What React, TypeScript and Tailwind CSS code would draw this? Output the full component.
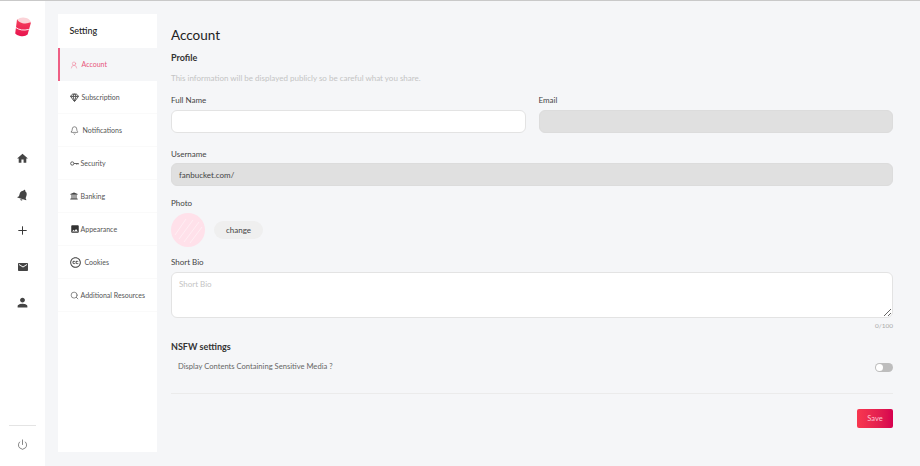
import { Bell, Gem, Plus, Power, Search, UserRound } from 'lucide-react';
import { FaCreativeCommons, FaUniversity } from 'react-icons/fa';
import { IoMdPerson } from 'react-icons/io';
import { MdHome, MdImage, MdMail, MdNotifications } from 'react-icons/md';

function KeyIcon() {
  return (
    <svg width="9" height="9" viewBox="0 0 12 12" fill="none" stroke="#555" strokeWidth="1.2" className="w-[9px] h-[9px]">
      <circle cx="3" cy="6" r="2.2" />
      <path d="M5.2 6H11.5M9 6v1.6M11 6v1.2" />
    </svg>
  );
}

function Logo() {
  return (
    <svg width="18" height="20" viewBox="0 0 18 20">
      <defs>
        <linearGradient id="bucket" x1="0" y1="0" x2="0" y2="1">
          <stop offset="0" stopColor="#f5405c" />
          <stop offset="1" stopColor="#e8144f" />
        </linearGradient>
      </defs>
      <path d="M3 2.5 L17 5.5 L13.6 17.5 Q11 20 6 19 Q2.5 18.4 1.2 16.5 Z" fill="url(#bucket)" />
      <path d="M3.4 2.6 Q6 0 11 0.7 Q15.8 1.6 16.8 5.1 Q13 7.2 8.5 6.2 Q4.4 5.2 3.4 2.6 Z" fill="#fbd3d8" />
      <path d="M1.8 10.5 Q7 14.4 14.8 12.4" fill="none" stroke="#fff" strokeWidth="0.9" />
    </svg>
  );
}

const menu = [
  { label: 'Subscription', icon: <Gem size={9} strokeWidth={2.4} color="#444" />, gap: 'gap-[3px]' },
  { label: 'Notifications', icon: <Bell size={9} strokeWidth={1.6} color="#444" />, gap: 'gap-[4px]' },
  { label: 'Security', icon: <KeyIcon />, gap: 'gap-[2px]' },
  { label: 'Banking', icon: <FaUniversity size={8} color="#444" />, gap: 'gap-[3px]' },
  { label: 'Appearance', icon: <MdImage size={10} color="#333" />, gap: 'gap-[1px]' },
  { label: 'Cookies', icon: <FaCreativeCommons size={11} color="#444" />, gap: 'gap-[4px]' },
  { label: 'Additional Resources', icon: <Search size={9} strokeWidth={1.6} color="#444" />, gap: 'gap-[2px]' },
];

export default function App() {
  return (
    <div className="w-[920px] h-[466px] overflow-hidden flex bg-[#f5f6f8] border-t border-[#c9c9c9] font-['Lato',sans-serif] text-[#333]">
      <aside className="w-[45px] h-full bg-white flex flex-col items-center shrink-0">
        <div className="mt-[16px] h-[20px]"><Logo /></div>
        <nav className="mt-[115px] flex flex-col items-center text-[#444]">
          <div className="h-[13px] flex items-center"><MdHome size={13} /></div>
          <div className="mt-[23px] h-[13px] flex items-center"><MdNotifications size={14} className="rotate-[18deg]" /></div>
          <div className="mt-[23px] h-[13px] flex items-center"><Plus size={13} strokeWidth={1.8} color="#333" /></div>
          <div className="mt-[23px] h-[13px] flex items-center"><MdMail size={12} /></div>
          <div className="mt-[23px] h-[13px] flex items-center"><IoMdPerson size={13} /></div>
        </nav>
        <div className="mt-auto w-[27px] border-t border-[#e4e4e4] mb-[13px]" />
        <div className="mb-[15px] h-[12px]"><Power size={11} strokeWidth={1.4} color="#444" /></div>
      </aside>

      <div className="ml-[13px] mt-[13px] w-[99px] h-[438px] bg-white shrink-0">
        <div className="h-[34px] pl-[11.5px] flex items-center text-[9px] font-medium text-[#222]">Setting</div>
        <div className="h-[33px] flex items-center pl-[9.5px] gap-[4px] bg-[#f5f6f8] border-l-2 border-[#ee5f84] text-[#e8557a] text-[7px]">
          <UserRound size={8} strokeWidth={1.6} color="#ef7d97" />
          <span>Account</span>
        </div>
        {menu.map((m) => (
          <div key={m.label} className={`h-[33px] flex items-center pl-[11.5px] border-b border-[#fafafa] text-[7px] text-[#555] ${m.gap}`}>
            {m.icon}
            <span>{m.label}</span>
          </div>
        ))}
      </div>

      <main className="ml-[14px] mr-[27px] flex-1 min-w-0 flex flex-col">
        <h1 className="mt-[25px] h-[18px] leading-[18px] text-[13.5px] text-[#222]">Account</h1>
        <h2 className="mt-[7px] h-[14px] leading-[14px] text-[9px] font-bold text-[#333]">Profile</h2>
        <p className="mt-[6px] h-[14px] leading-[14px] text-[8px] text-[#c4c4c4]">This information will be displayed publicly so be careful what you share.</p>

        <div className="mt-[11px] grid grid-cols-2 gap-x-[13px]">
          <div>
            <label className="block h-[10px] leading-[8px] text-[8px] text-[#444]">Full Name</label>
            <div className="mt-[4px] h-[23px] rounded-[6px] bg-white border border-[#e3e3e3]" />
          </div>
          <div>
            <label className="block h-[10px] leading-[8px] text-[8px] text-[#444]">Email</label>
            <div className="mt-[4px] h-[23px] rounded-[6px] bg-[#e0e0e0] border border-[#dcdcdc]" />
          </div>
        </div>

        <label className="mt-[17px] block h-[10px] leading-[8px] text-[8px] text-[#444]">Username</label>
        <div className="mt-[3px] h-[23px] rounded-[6px] bg-[#e0e0e0] border border-[#dcdcdc] flex items-center pl-[7px] text-[8px] text-[#444]">fanbucket.com/</div>

        <label className="mt-[12px] block h-[10px] leading-[10px] text-[8px] text-[#444]">Photo</label>
        <div className="mt-[5px] flex items-center gap-[9px]">
          <div className="w-[34px] h-[34px] rounded-full bg-[#ffe1ea] overflow-hidden">
            <svg width="34" height="34" viewBox="0 0 34 34" stroke="#ffeef3" strokeWidth="1">
              <path d="M4 22 15 6M8 26 22 7M13 29 28 9M19 30 31 14" />
            </svg>
          </div>
          <button className="w-[49px] h-[18px] rounded-full bg-[#efefef] text-[8px] text-[#444]">change</button>
        </div>

        <label className="mt-[11px] block h-[10px] leading-[8px] text-[8px] text-[#444]">Short Bio</label>
        <textarea placeholder="Short Bio" className="block mt-[4px] h-[46px] w-full rounded-[6px] bg-white border border-[#e3e3e3] px-[7px] py-[5px] text-[8px] placeholder:text-[#c4c4c4] outline-none" />
        <div className="mt-[3px] h-[10px] leading-[10px] text-right text-[6.5px] text-[#aaa]">0/100</div>

        <h2 className="mt-[10px] h-[12px] leading-[12px] text-[9px] font-bold text-[#333]">NSFW settings</h2>
        <div className="mt-[8px] h-[12px] pl-[7px] flex items-center justify-between text-[7.6px] text-[#666]">
          <span>Display Contents Containing Sensitive Media ?</span>
          <div className="w-[18px] h-[9px] rounded-full bg-[#bdbdbd] flex items-center pl-[1px]">
            <div className="w-[7px] h-[7px] rounded-full bg-white" />
          </div>
        </div>
        <div className="mt-[20px] border-t border-[#ebebeb]" />
        <div className="mt-[15px] flex justify-end">
          <button className="w-[36px] h-[19px] rounded-[2px] bg-gradient-to-r from-[#f8374f] to-[#d6004f] text-[7.5px] text-[#ffc4d0]">Save</button>
        </div>
      </main>
    </div>
  );
}
